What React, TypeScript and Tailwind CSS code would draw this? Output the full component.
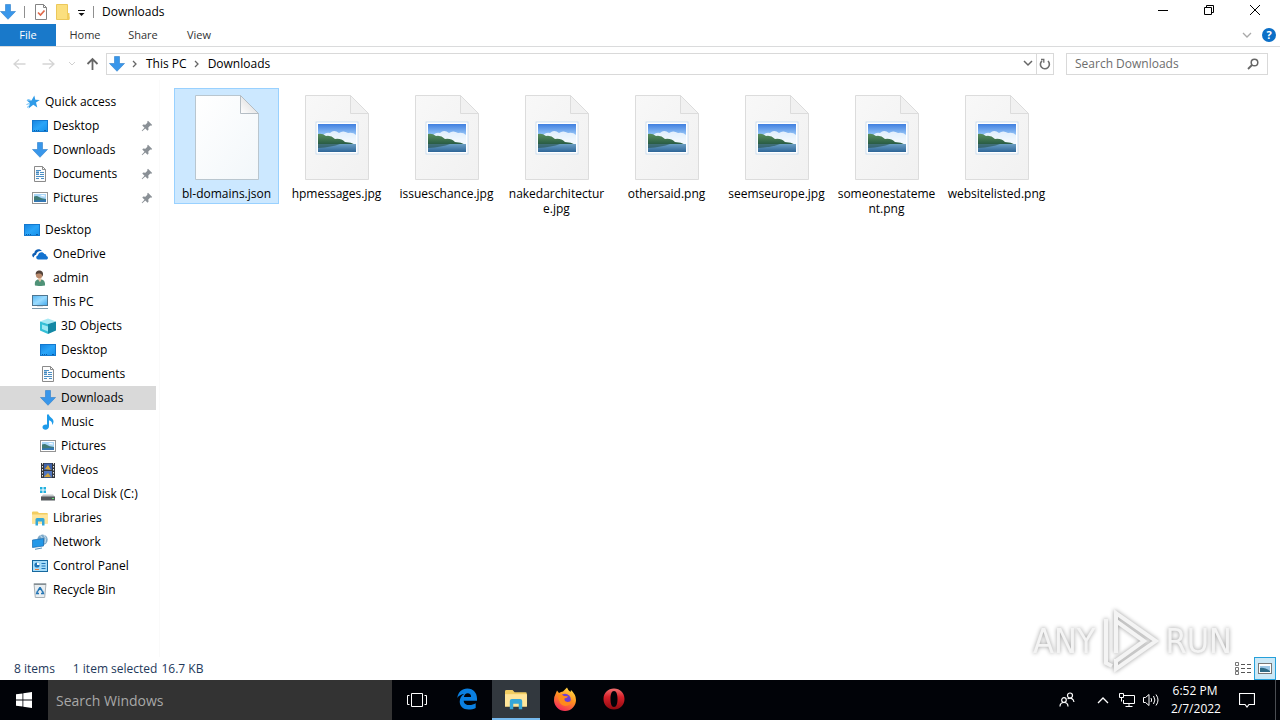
import type { ReactNode } from "react";
import clsx from "clsx";

const Defs = () => (
    <svg width="0" height="0" className="absolute" aria-hidden="true">
        <defs>
            <linearGradient id="sky" x1="0" y1="0" x2="0" y2="1">
                <stop offset="0" stopColor="#3f7fe0" />
                <stop offset="0.35" stopColor="#8fc0f5" />
                <stop offset="0.6" stopColor="#e3f2fd" />
            </linearGradient>
            <linearGradient id="water" x1="0" y1="0" x2="0" y2="1">
                <stop offset="0" stopColor="#6b9fc4" />
                <stop offset="1" stopColor="#2d6597" />
            </linearGradient>
            <linearGradient id="hill" x1="0" y1="0" x2="0" y2="1">
                <stop offset="0" stopColor="#5a8f5c" />
                <stop offset="1" stopColor="#1f5240" />
            </linearGradient>
            <linearGradient id="paper" x1="0" y1="0" x2="1" y2="1">
                <stop offset="0" stopColor="#f8f8f8" />
                <stop offset="1" stopColor="#f1f1f1" />
            </linearGradient>
            <linearGradient id="blank" x1="0" y1="0" x2="1" y2="1">
                <stop offset="0" stopColor="#ffffff" />
                <stop offset="1" stopColor="#f2f7fa" />
            </linearGradient>
            <linearGradient id="fold" x1="0" y1="1" x2="1" y2="0">
                <stop offset="0" stopColor="#ffffff" />
                <stop offset="0.5" stopColor="#e8e8e8" />
            </linearGradient>
            <linearGradient id="screen" x1="0" y1="0" x2="1" y2="1">
                <stop offset="0" stopColor="#1583e0" />
                <stop offset="0.5" stopColor="#2aa5f8" />
                <stop offset="1" stopColor="#1590ea" />
            </linearGradient>
            <linearGradient id="monitor" x1="0" y1="0" x2="1" y2="1">
                <stop offset="0" stopColor="#55b5f2" />
                <stop offset="0.5" stopColor="#9bdcff" />
                <stop offset="1" stopColor="#43a9ec" />
            </linearGradient>
            <linearGradient id="flame" x1="0.8" y1="0" x2="0.3" y2="1">
                <stop offset="0" stopColor="#ffe14a" />
                <stop offset="0.45" stopColor="#ff9420" />
                <stop offset="1" stopColor="#f4265c" />
            </linearGradient>
            <linearGradient id="opera" x1="0" y1="0" x2="0" y2="1">
                <stop offset="0" stopColor="#f07070" />
                <stop offset="0.4" stopColor="#d62029" />
                <stop offset="1" stopColor="#8d0a10" />
            </linearGradient>
        </defs>
    </svg>
);

interface IconProps {
    children: ReactNode;
    size?: number;
}

const Icon = ({ children, size = 16 }: IconProps) => (
    <svg width={size} height={size} viewBox="0 0 16 16" fill="none" className="shrink-0" aria-hidden="true">
        {children}
    </svg>
);

const StarIcon = () => (
    <Icon>
        <path d="M10.300 1.500l1 4.200 4.500.2-3.800 2.600 1.300 5-4-2.700-4.800 3.700 1.300-5.500L2.500 6.200l5 .2z" fill="#2f9be8" />
        <path d="M2.500 10.500l3-1M3 13.500l3-2.500M3.500 5.500l3 .7" stroke="#68bdf5" />
    </Icon>
);

const DesktopIcon = () => (
    <Icon>
        <rect x="0.500" y="2.500" width="15" height="11" fill="url(#screen)" stroke="#1379cf" />
        <path d="M2 12.500h1M4 12.500h1M6 12.500h1M12 12.500h2" stroke="#0c5fa8" />
    </Icon>
);

const ArrowIcon = ({ size }: { size?: number }) => (
    <Icon size={size}>
        <path d="M5.500.5h5v7h5L8 15.300.5 7.500h5z" fill="#3896ea" stroke="#2d7dca" strokeWidth="0.600" />
    </Icon>
);

const DocumentIcon = () => (
    <Icon>
        <path d="M2.500.5h8l3 3v12h-11z" fill="#fcfcfc" stroke="#8b8b8b" />
        <path d="M10.500.5v3h3" stroke="#8b8b8b" />
        <path d="M4 4.500h5M8 6.500h4M4 8.500h3M8 8.500h4M4 10.500h8M4 12.500h3M9 12.500h3" stroke="#4b8fc4" />
        <path d="M4 5.500h3v2H4z" fill="#3f86bf" />
    </Icon>
);

const PictureIcon = () => (
    <Icon>
        <rect x="0.500" y="2.500" width="15" height="11" fill="#fff" stroke="#949494" />
        <rect x="2" y="4" width="12" height="8" fill="#a9d6f7" />
        <path d="M2 6.500q3-1 5 .5t7 2V12H2z" fill="#3f7a75" />
        <path d="M2 10.500l12-1V12H2z" fill="#3377b4" />
        <path d="M8 6q2-1.500 5-.5v1z" fill="#fff" />
    </Icon>
);

const OneDriveIcon = () => (
    <Icon>
        <path d="M1.800 11.500C-.5 10.800-.3 7.300 2.300 7.100 2.500 3.500 7.500 1.500 10 5.200c-3-.7-5.600 1.100-5.900 3.500-1.400.3-2.300 1.300-2.300 2.800z" fill="#0f5fb5" />
        <path d="M6.200 13.500c-2.600-.2-2.500-3.700-.3-4 .4-3.500 5-4.500 6.500-1.400 1.600-.1 2 .9 2 1.800 2.200.4 2 3.600-.3 3.600z" fill="#1272d0" />
    </Icon>
);

const UserIcon = () => (
    <Icon>
        <path d="M3 15.500c-.8-4 .8-6 4.500-6.200 4 0 5.800 2 5.500 6.200-3 .7-7 .7-10 0z" fill="#4f9277" />
        <path d="M6 9.300l2 3 1.500-3-.3-1.800H6.300z" fill="#e6c5aa" />
        <circle cx="7.200" cy="5" r="3.300" fill="#b98a6c" />
        <path d="M3.700 4.800C3.400 1 6 .2 8 .5c2.700.3 3.800 3 2.600 6-.6-2-1.500-2.700-3-2.900-1.500 0-3 0-3.900 1.200z" fill="#54443b" />
    </Icon>
);

const PcIcon = () => (
    <Icon>
        <rect x="0.500" y="1.500" width="15" height="10" fill="url(#monitor)" stroke="#4f7690" />
        <path d="M0 14.500h16" stroke="#7b98aa" />
        <path d="M5 12.500h6" stroke="#dbe5eb" />
    </Icon>
);

const CubeIcon = () => (
    <Icon>
        <path d="M0 3.500L8 .5l8 3L8 6z" fill="#a7e9f4" />
        <path d="M0 3.500L8 6v10l-8-3.500z" fill="#35bfd6" />
        <path d="M16 3.500L8 6v10l8-3.500z" fill="#1388a5" />
        <path d="M2 6.500L8 8.500v5L2 11z" fill="#9be8f3" />
    </Icon>
);

const MusicIcon = () => (
    <Icon>
        <path d="M7 .5h2c0 3 4.500 3.500 4.500 7 0 1.500-.6 2.600-1.500 3.500.5-2.500-.5-4-3-4.700v6C9 14.500 7.300 15.700 5.500 15.700 3.800 15.700 2.500 14.700 2.500 13.300c0-2 2.500-3.200 4.500-2.500z" fill="#1e9bea" />
    </Icon>
);

const VideoIcon = () => (
    <Icon>
        <rect x="1" y="1" width="14" height="15" fill="#33363b" />
        <rect x="4" y="1.500" width="8" height="6.500" fill="#3e62a9" />
        <rect x="4" y="9" width="8" height="6.500" fill="#4f75bd" />
        <path d="M5 7l3-4 3 5zM4 15l4-4 3 4z" fill="#d2a33b" />
        <path d="M2.500 1v15M13.500 1v15" stroke="#e8e8e8" strokeDasharray="1.500 1.500" />
    </Icon>
);

const DiskIcon = () => (
    <Icon>
        <path d="M0 1h2.500v2.500H0zM3.500 1H6v2.500H3.500zM0 4.500h2.500V7H0zM3.500 4.500H6V7H3.500z" fill="#21b0de" />
        <path d="M3 8.500h10l2 2.500H1z" fill="#c3c7ca" />
        <rect x="1" y="10.500" width="14" height="4" fill="#53585c" />
        <rect x="12" y="12" width="2" height="1" fill="#5de36e" />
    </Icon>
);

const LibraryIcon = ({ size }: { size?: number }) => (
    <Icon size={size}>
        <path d="M0 2.500q0-1 1-1h4.500l1.500 1.500h8q.8 0 .8.800V13.500H0z" fill="#f2cd62" />
        <path d="M0 4.500h16v9H0z" fill="#ffe59a" />
        <path d="M3.500 9.500q0-1.500 1.500-1.500h6q1.500 0 1.500 1.500v6H10v-4H6v4H3.500z" fill="#35a7d8" />
    </Icon>
);

const NetworkIcon = () => (
    <Icon>
        <circle cx="10.500" cy="5.700" r="5.200" fill="#7ea9c9" />
        <path d="M8 1.500q3 1 2 4.500M12 1q3 3 1 8" stroke="#c6dfef" />
        <path d="M.5 6l11-1.500v7.500l-11 1.500z" fill="#2398e8" stroke="#1668ae" strokeWidth="0.700" />
        <path d="M3 15.300l7-1.300" stroke="#548eb8" />
    </Icon>
);

const ControlPanelIcon = () => (
    <Icon>
        <rect x="0.500" y="2.500" width="15" height="11" fill="#a5dcfa" stroke="#16689e" />
        <circle cx="5" cy="7" r="2.600" fill="#1d73b6" />
        <path d="M5 7V4.400A2.600 2.600 0 017.600 7z" fill="#fff" />
        <path d="M9.500 5.500h4M9.500 8h4M9.500 10.500h4" stroke="#1d73b6" />
        <path d="M3 11.500h4" stroke="#e4793c" />
    </Icon>
);

const RecycleIcon = () => (
    <Icon>
        <path d="M2 1.500h12L12.700 15.500H3.300z" fill="#e9eef1" stroke="#a7afb4" />
        <path d="M2 2.500h12" stroke="#868e92" />
        <path d="M8 5.500L5.800 9M8 5.500l2.200 3.500M5.500 9l-.8 2.500H7M10.500 9l.9 2.500H9" stroke="#2576b5" strokeWidth="1.500" />
    </Icon>
);

const PinIcon = () => (
    <svg width="12" height="12" viewBox="0 0 12 12" className="shrink-0" aria-hidden="true">
        <path d="M7 .8L11.200 5l-1 .8-.9-.2-2 2 .2 2.200-1 .9L4.300 8.500 1.200 11.300.7 10.800 3.500 7.700 1.300 5.500l.9-1 2.200.2 2-2-.2-.9z" fill="#8a9096" />
    </svg>
);

const Landscape = ({ x, y }: { x: number; y: number }) => (
    <g transform={`translate(${x} ${y})`}>
        <rect x="-2" y="-2" width="42" height="32" fill="#fff" stroke="#bcd3ea" strokeWidth="0.700" />
        <rect width="38" height="28" fill="url(#sky)" />
        <path d="M4 13q3-5 8-4 4-4 9 0 4-3 9 0 5-1 8 2v9H4z" fill="#f3f9fe" opacity="0.850" />
        <path d="M0 10q4-1 8 2 5-1 9 3 6-1 10 3 6 0 11 3v1H0z" fill="url(#hill)" />
        <rect y="20" width="38" height="8" fill="url(#water)" />
        <path d="M0 20h22q-8 3-22 4z" fill="#245046" opacity="0.600" />
    </g>
);

const FileIcon = ({ image }: { image?: boolean }) => (
    <svg width="64" height="85" viewBox="0 0 64 85" aria-hidden="true">
        <path d="M.5.5h45l18 18v66H.5z" fill={image ? "url(#paper)" : "url(#blank)"} stroke={image ? "#dcdcdc" : "#b9c6cf"} />
        <path d="M45.500.5v18h18z" fill={image ? "#f1f1f1" : "url(#fold)"} stroke={image ? "#dcdcdc" : "#b4bdc4"} />
        {image && <Landscape x={13} y={29} />}
    </svg>
);

interface TreeItem {
    label: string;
    icon: ReactNode;
    level: 1 | 2 | 3;
    pinned?: boolean;
    active?: boolean;
}

const quickAccess: TreeItem[] = [
    { label: "Quick access", icon: <StarIcon />, level: 1 },
    { label: "Desktop", icon: <DesktopIcon />, level: 2, pinned: true },
    { label: "Downloads", icon: <ArrowIcon />, level: 2, pinned: true },
    { label: "Documents", icon: <DocumentIcon />, level: 2, pinned: true },
    { label: "Pictures", icon: <PictureIcon />, level: 2, pinned: true },
];

const desktop: TreeItem[] = [
    { label: "Desktop", icon: <DesktopIcon />, level: 1 },
    { label: "OneDrive", icon: <OneDriveIcon />, level: 2 },
    { label: "admin", icon: <UserIcon />, level: 2 },
    { label: "This PC", icon: <PcIcon />, level: 2 },
    { label: "3D Objects", icon: <CubeIcon />, level: 3 },
    { label: "Desktop", icon: <DesktopIcon />, level: 3 },
    { label: "Documents", icon: <DocumentIcon />, level: 3 },
    { label: "Downloads", icon: <ArrowIcon />, level: 3, active: true },
    { label: "Music", icon: <MusicIcon />, level: 3 },
    { label: "Pictures", icon: <PictureIcon />, level: 3 },
    { label: "Videos", icon: <VideoIcon />, level: 3 },
    { label: "Local Disk (C:)", icon: <DiskIcon />, level: 3 },
    { label: "Libraries", icon: <LibraryIcon />, level: 2 },
    { label: "Network", icon: <NetworkIcon />, level: 2 },
    { label: "Control Panel", icon: <ControlPanelIcon />, level: 2 },
    { label: "Recycle Bin", icon: <RecycleIcon />, level: 2 },
];

const files = [
    "bl-domains.json",
    "hpmessages.jpg",
    "issueschance.jpg",
    "nakedarchitecture.jpg",
    "othersaid.png",
    "seemseurope.jpg",
    "someonestatement.png",
    "websitelisted.png",
];

const TreeGroup = ({ items }: { items: TreeItem[] }) => (
    <ul>
        {items.map((item) => (
            <li key={item.level + item.label}>
                <button
                    className={clsx(
                        "flex h-6 w-full items-center gap-[5px] pr-[3px] text-left whitespace-nowrap",
                        item.level === 1 && "pl-6",
                        item.level === 2 && "pl-8",
                        item.level === 3 && "pl-10",
                        item.active && "bg-[#d9d9d9]",
                    )}
                >
                    {item.icon}
                    <span className="flex-1">{item.label}</span>
                    {item.pinned && <PinIcon />}
                </button>
            </li>
        ))}
    </ul>
);

const TitleBar = () => (
    <header className="flex h-6 items-start">
        <div className="flex h-full flex-1 items-center">
            <ArrowIcon />
            <span className="mx-2 h-3 w-px bg-[#8f8f8f]" />
            <button aria-label="Properties">
                <Icon>
                    <path d="M2.500.5h8l3 3v12h-11z" fill="#fff" stroke="#848484" />
                    <path d="M10.500.5v3h3" stroke="#848484" />
                    <path d="M5 8.500l2.500 2.500 4-4.500" stroke="#e0694a" strokeWidth="1.700" />
                </Icon>
            </button>
            <button aria-label="New folder" className="ml-1.5">
                <Icon>
                    <path d="M1.500.5h11v12h1.500v3H1.500z" fill="#fbdf7e" stroke="#ecc85b" />
                    <path d="M12 9h2.500v6.500H12z" fill="#f1cc5b" />
                </Icon>
            </button>
            <button aria-label="Customize Quick Access Toolbar" className="ml-0.5">
                <Icon>
                    <path d="M5 6.500h7" stroke="#111" />
                    <path d="M5.500 9h6l-3 3z" fill="#111" />
                </Icon>
            </button>
            <span className="mr-2 ml-1 h-3 w-px bg-[#8f8f8f]" />
            <h1>Downloads</h1>
        </div>
        <div className="flex h-5 pr-0.5">
            <button aria-label="Minimize" className="flex w-[46px] items-center justify-center">
                <svg width="10" height="10" aria-hidden="true"><path d="M0 5.500h10" stroke="#000" /></svg>
            </button>
            <button aria-label="Restore" className="flex w-[46px] items-center justify-center">
                <svg width="10" height="10" fill="none" aria-hidden="true">
                    <path d="M.5 2.500h7v7h-7zM2.500 2.500v-2h7v7h-2" stroke="#000" />
                </svg>
            </button>
            <button aria-label="Close" className="flex w-[46px] items-center justify-center">
                <svg width="10" height="10" aria-hidden="true"><path d="M0 0l10 10M10 0L0 10" stroke="#000" /></svg>
            </button>
        </div>
    </header>
);

const Ribbon = () => (
    <nav className="flex h-[23px] border-b border-[#dadbdc] text-[11px] text-[#333]">
        <button className="w-14 bg-[#1979ca] text-white">File</button>
        <button className="ml-px w-14">Home</button>
        <button className="ml-0.5 w-14">Share</button>
        <button className="w-14">View</button>
        <div className="ml-auto flex items-center gap-2.5 pr-1">
            <button aria-label="Expand the Ribbon">
                <svg width="10" height="6" fill="none" aria-hidden="true"><path d="M1 1l4 4 4-4" stroke="#a9a9a9" strokeWidth="1.300" /></svg>
            </button>
            <button aria-label="Help" className="size-3.5 rounded-full bg-[#0b6fc7] text-[11px] leading-[14px] font-bold text-white">
                ?
            </button>
        </div>
    </nav>
);

const Crumb = () => (
    <svg width="5" height="8" fill="none" aria-hidden="true"><path d="M1 1l3 3-3 3" stroke="#666" strokeWidth="1.300" /></svg>
);

const AddressBar = () => (
    <div className="flex h-[33px] items-center pr-3">
        <div className="flex w-[106px] items-center pl-3">
            <button aria-label="Back">
                <Icon><path d="M13.500 8H2M7 3.500L2 8l5 4.500" stroke="#d5d5d5" strokeWidth="1.300" /></Icon>
            </button>
            <button aria-label="Forward" className="ml-3">
                <Icon><path d="M2.500 8H14M9 3.500L14 8l-5 4.500" stroke="#d5d5d5" strokeWidth="1.300" /></Icon>
            </button>
            <button aria-label="Recent locations" className="ml-3">
                <svg width="8" height="6" fill="none" aria-hidden="true"><path d="M1 1l3 3 3-3" stroke="#d0d0d0" /></svg>
            </button>
            <button aria-label="Up" className="ml-2">
                <Icon><path d="M8.500 14V3M3.500 8l5-5 5 5" stroke="#666" strokeWidth="1.800" /></Icon>
            </button>
        </div>
        <div className="flex h-[22px] flex-1 items-center border border-[#d9d9d9] pl-0.5">
            <ArrowIcon />
            <span className="ml-[7px]"><Crumb /></span>
            <button className="ml-[9px]">This PC</button>
            <span className="ml-[7px]"><Crumb /></span>
            <button className="ml-[9px]">Downloads</button>
            <button aria-label="Previous locations" className="ml-auto flex w-4 justify-center">
                <svg width="10" height="7" fill="none" aria-hidden="true"><path d="M1 1l4 4 4-4" stroke="#666" strokeWidth="1.500" /></svg>
            </button>
            <button aria-label="Refresh" className="flex h-full w-[17px] items-center justify-center border-l border-[#d9d9d9]">
                <svg width="12" height="12" fill="none" aria-hidden="true">
                    <path d="M3 2.800A4.500 4.500 0 109 3" stroke="#6d6d6d" strokeWidth="1.600" />
                    <path d="M2 1.500h2.800v3.200" stroke="#6d6d6d" strokeWidth="1.300" />
                </svg>
            </button>
        </div>
        <label className="ml-3 flex h-[22px] w-[202px] items-center border border-[#d9d9d9] pr-2 pl-2">
            <input
                aria-label="Search Downloads"
                placeholder="Search Downloads"
                className="min-w-0 flex-1 outline-none placeholder:text-[#6d6d6d]"
            />
            <svg width="12" height="12" fill="none" aria-hidden="true">
                <circle cx="7.500" cy="4.500" r="3.300" stroke="#666" strokeWidth="1.500" />
                <path d="M5 7l-4 4" stroke="#666" strokeWidth="1.800" />
            </svg>
        </label>
    </div>
);

const FileGrid = () => (
    <ul className="flex flex-wrap content-start gap-x-[5px] pt-2 pl-[14px]">
        {files.map((name, index) => (
            <li key={name}>
                <button
                    className={clsx(
                        "flex w-[105px] flex-col items-center border px-px pt-1.5 pb-0.5",
                        index === 0 ? "border-[#99d1ff] bg-[#cce8ff]" : "border-transparent",
                    )}
                >
                    <FileIcon image={index > 0} />
                    <span className="mt-1.5 w-full leading-[15px] break-all">{name}</span>
                </button>
            </li>
        ))}
    </ul>
);

const Watermark = () => (
    <div
        className="absolute right-12 -bottom-4 flex items-center gap-1.5 font-['DejaVu_Sans_Condensed','Liberation_Sans_Narrow','Liberation_Sans',sans-serif] text-[34px] leading-none text-[#f4f4f4] drop-shadow-[0_0_2px_#999]"
    >
        <span>ANY</span>
        <svg width="58" height="64" viewBox="0 0 58 64" fill="none" aria-hidden="true">
            <path d="M15 12V4l40 28-40 28V50M15 12l28 20-28 20M15 12v32M5 10v44l6 3" stroke="#f4f4f4" strokeWidth="4" />
        </svg>
        <span>RUN</span>
    </div>
);

const StatusBar = () => (
    <footer className="flex h-[23px] items-center pl-3.5 text-[#1e395b]">
        <span>8 items</span>
        <span className="ml-[18px]">1 item selected</span>
        <span className="ml-1">16.7 KB</span>
        <button aria-label="Details view" className="ml-auto flex h-full w-[22px] items-center justify-center">
            <svg width="16" height="14" fill="none" aria-hidden="true">
                <path d="M.5.5h3v3h-3zM.5 5.500h3v3h-3zM.5 9.500h3v3h-3z" stroke="#777" />
                <path d="M6 2.500h4M12 2.500h4M6 6.500h4M12 6.500h4M6 10.500h4M12 10.500h4" stroke="#555" />
            </svg>
        </button>
        <button aria-label="Large icons view" className="mr-1 flex h-full w-[22px] items-center justify-center border border-[#26a0da] bg-[#cbe8f6]">
            <svg width="14" height="11" fill="none" aria-hidden="true">
                <rect x="0.500" y="0.500" width="13" height="10" fill="#fff" stroke="#777" />
                <path d="M2 3h10v6H2z" fill="#9cc8e8" />
                <path d="M2 5q4-1 10 3v1H2z" fill="#2f6b86" />
            </svg>
        </button>
    </footer>
);

const TaskButton = ({ label, active, children }: { label: string; active?: boolean; children: ReactNode }) => (
    <button
        aria-label={label}
        className={clsx(
            "flex h-full w-12 items-center justify-center border-b-2",
            active ? "border-[#76b9ed] bg-[#32383e]" : "border-transparent",
        )}
    >
        {children}
    </button>
);

const Taskbar = () => (
    <div className="flex h-10 items-center bg-[#010308] text-white">
        <button aria-label="Start" className="flex h-full w-12 items-center justify-center">
            <svg width="16" height="16" fill="#fff" aria-hidden="true">
                <path d="M0 2.300L6.500 1.400v6.200H0zM7.300 1.300L16 0v7.600H7.300zM0 8.400h6.500v6.200L0 13.700zM7.300 8.400H16V16l-8.700-1.300z" />
            </svg>
        </button>
        <input
            aria-label="Search Windows"
            placeholder="Search Windows"
            className="h-full w-[344px] bg-[#333] px-2 text-sm outline-none placeholder:text-[#a8a8a8]"
        />
        <div className="flex h-full gap-px">
            <button aria-label="Task View" className="flex w-[50px] items-center justify-center">
                <svg width="20" height="14" fill="none" stroke="#fff" aria-hidden="true">
                    <path d="M4.500.5h11v13h-11zM2.500 2.500h-2v9h2M17.500 2.500h2v9h-2" />
                </svg>
            </button>
            <TaskButton label="Microsoft Edge">
                <svg width="20" height="22" viewBox="0 0 20 22" aria-hidden="true">
                    <path d="M.3 10C1 4 5 .5 10.300.5 16.500.5 20 5 20 10.500v2.200H6.700c.2 3 2.800 4.400 5.700 4.400 2.300 0 4.500-.7 6.300-1.800v4.600C16.700 21 14.200 21.500 11.500 21.500 6 21.500 2.700 18.200 2.700 13.500c0-3.300 1.800-6 4.500-7.500C4.500 6.200 1.800 7.500.3 10zM6.900 9h7.200c0-2.500-1.300-3.700-3.400-3.700-2 0-3.400 1.400-3.800 3.700z" fill="#0a7fe0" />
                </svg>
            </TaskButton>
            <TaskButton label="File Explorer" active>
                <LibraryIcon size={22} />
            </TaskButton>
            <TaskButton label="Firefox">
                <svg width="24" height="24" viewBox="0 0 24 24" aria-hidden="true">
                    <path d="M2.500 7L4 3.500 6 6q2-1.500 4-1.500L14 .5q1 3 3.500 4.500L18 3q5 4.500 5 10A11 11 0 111 13q0-3.500 1.500-6z" fill="url(#flame)" />
                    <circle cx="12" cy="12.500" r="5.800" fill="#6e3fd4" />
                    <path d="M5 8q4-1 6 1l4 .3q-.5 2-3.500 2.200-.5 3 3 3.500 3 0 5-2.500-1 6.500-7.500 6.500Q5 18 5 8z" fill="#ff8a1c" />
                </svg>
            </TaskButton>
            <TaskButton label="Opera">
                <svg width="22" height="22" viewBox="0 0 22 22" aria-hidden="true">
                    <path fillRule="evenodd" d="M11 .5C17 .5 21.500 5 21.500 11S17 21.500 11 21.500.5 17 .5 11 5 .5 11 .5zM11 3C8.500 3 7.500 6.500 7.500 11s1 8 3.500 8 3.500-3.500 3.500-8S13.500 3 11 3z" fill="url(#opera)" />
                </svg>
            </TaskButton>
        </div>
        <div className="ml-auto flex h-full items-center">
            <button aria-label="People" className="mr-[22px]">
                <Icon>
                    <g stroke="#fff" strokeWidth="1.200">
                        <circle cx="5" cy="8" r="2.300" />
                        <path d="M1 14.500q0-4 4-4t4 4" />
                        <circle cx="11" cy="3.500" r="2.500" />
                        <path d="M8.500 6.800q5.500-2 6.500 3.200" />
                    </g>
                </Icon>
            </button>
            <button aria-label="Show hidden icons" className="mr-2.5">
                <svg width="12" height="8" fill="none" aria-hidden="true"><path d="M1 7l5-5 5 5" stroke="#fff" strokeWidth="1.300" /></svg>
            </button>
            <button aria-label="Network" className="mr-2">
                <Icon>
                    <path d="M4 3.500h11.500v8H4.500V8M10 11.500v3M6.500 14.500h7M.5 1.500h4v4h-4zM2.500 5.500v4" stroke="#fff" />
                </Icon>
            </button>
            <button aria-label="Volume" className="mr-3">
                <Icon>
                    <path d="M.5 5.500h2L6 2.500v11L2.500 10.500h-2zM8 6q1.300 2 0 4M10.500 4q2.800 4 0 8M13 2.500q4 5.500 0 11" stroke="#fff" />
                </Icon>
            </button>
            <time className="w-12 text-center leading-[18px]">6:52 PM<br />2/7/2022</time>
            <button aria-label="Notifications" className="mx-5">
                <Icon>
                    <path d="M.5 1.500h15v11H10l-2 2.500-2-2.500H.5z" stroke="#fff" strokeWidth="1.200" />
                </Icon>
            </button>
            <button aria-label="Show desktop" className="h-full w-[5px] border-l border-[#4a4d52]" />
        </div>
    </div>
);

const App = () => {
    return (
        <div className="flex min-h-screen flex-col bg-white font-['Open_Sans','Noto_Sans',sans-serif] text-xs text-black">
            <Defs />
            <TitleBar />
            <Ribbon />
            <AddressBar />
            <main className="relative flex flex-1">
                <aside className="flex w-[160px] shrink-0 flex-col gap-2 border-r border-[#fafafa] pt-2.5 pr-[3px]">
                    <TreeGroup items={quickAccess} />
                    <TreeGroup items={desktop} />
                </aside>
                <FileGrid />
                <Watermark />
            </main>
            <StatusBar />
            <Taskbar />
        </div>
    );
};

export default App;
